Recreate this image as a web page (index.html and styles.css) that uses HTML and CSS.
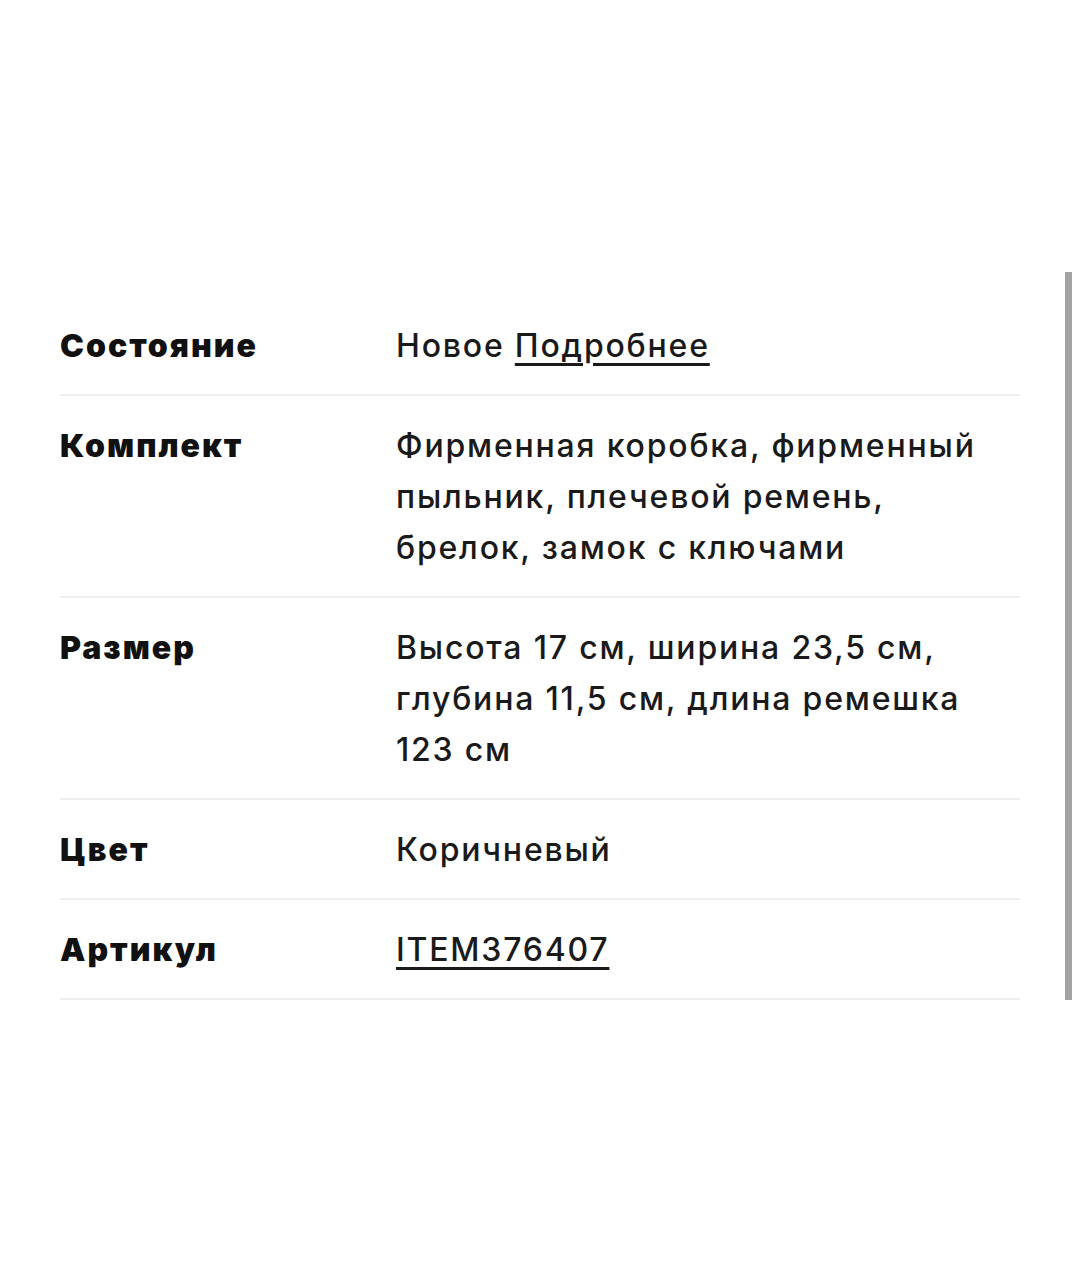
FILE: index.html
```html
<!DOCTYPE html>
<html lang="ru">
<head>
<meta charset="utf-8">
<link rel="stylesheet" href="styles.css">
</head>
<body>
<div class="page">
  <div class="scrollbar"></div>
  <dl class="specs">
    <div class="row">
      <dt class="label">Состояние</dt>
      <dd class="value">Новое <a class="link" href="#">Подробнее</a></dd>
    </div>
    <div class="row">
      <dt class="label">Комплект</dt>
      <dd class="value">Фирменная коробка, фирменный пыльник, плечевой ремень, брелок, замок с ключами</dd>
    </div>
    <div class="row">
      <dt class="label">Размер</dt>
      <dd class="value">Высота 17 см, ширина 23,5 см, глубина 11,5 см, длина ремешка 123 см</dd>
    </div>
    <div class="row">
      <dt class="label">Цвет</dt>
      <dd class="value">Коричневый</dd>
    </div>
    <div class="row">
      <dt class="label">Артикул</dt>
      <dd class="value"><a class="link" href="#">ITEM376407</a></dd>
    </div>
  </dl>
</div>
</body>
</html>
```

FILE: styles.css
```css
html, body {
  margin: 0;
  padding: 0;
  background: #ffffff;
}
.page {
  position: relative;
  width: 1080px;
  height: 1280px;
  padding-top: 296px;
  box-sizing: border-box;
  font-family: Inter, "Noto Sans", sans-serif;
  color: #1a1a1a;
}
.scrollbar {
  position: absolute;
  left: 1065px;
  top: 272px;
  width: 7px;
  height: 728px;
  background: #a3a3a3;
}
.specs {
  margin: 0 0 0 60px;
  width: 960px;
}
.row {
  display: grid;
  grid-template-columns: 336px 600px;
  padding: 24px 0 23px;
  border-bottom: 2px solid #efefef;
  font-size: 32px;
  line-height: 51px;
}
.label {
  margin: 0;
  font-weight: 900;
  color: #111;
  letter-spacing: 2px;
}
.value {
  margin: 0;
  font-weight: 500;
  letter-spacing: 1.8px;
}
.link {
  color: inherit;
  text-decoration: underline;
  text-decoration-thickness: 3px;
  text-underline-offset: 6px;
}
```
